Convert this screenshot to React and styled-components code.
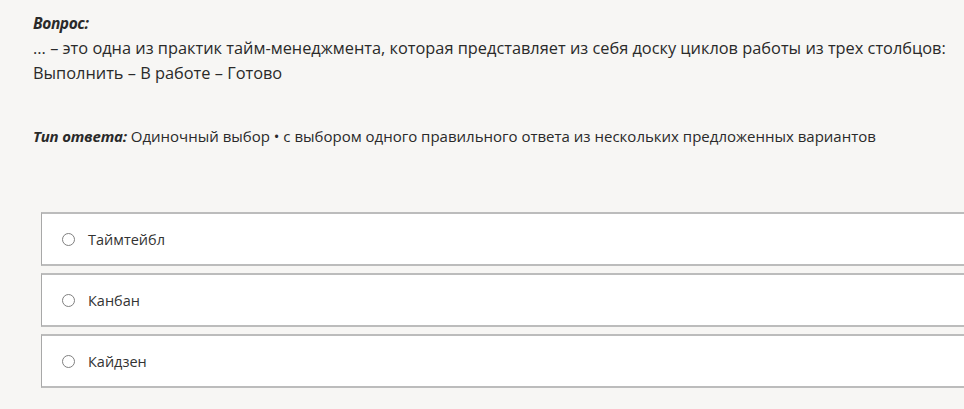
import React from 'react';
import styled, { createGlobalStyle } from 'styled-components';

const GlobalStyle = createGlobalStyle`
  html, body {
    margin: 0;
    padding: 0;
    background: #f7f6f4;
  }
  body {
    font-family: 'Open Sans', 'Noto Sans', sans-serif;
    color: #2a2a2a;
    overflow: hidden;
  }
`;

const Page = styled.div`
  padding: 12px 0 0 33px;
  width: 964px;
  height: 409px;
  box-sizing: border-box;
`;

const Label = styled.div`
  font-weight: 700;
  font-style: italic;
  font-size: 15.5px;
  line-height: 22px;
  letter-spacing: -0.4px;
`;

const Question = styled.p`
  margin: 2px 0 0;
  font-size: 16.35px;
  line-height: 25px;
  white-space: nowrap;
`;

const AnswerType = styled.p`
  margin: 39px 0 0;
  font-size: 15px;
  line-height: 22px;
  white-space: nowrap;
`;

const TypeLabel = styled.span`
  font-weight: 700;
  font-style: italic;
  letter-spacing: -0.2px;
`;

const Options = styled.div`
  margin: 65px 0 0 8px;
  display: flex;
  flex-direction: column;
  gap: 7px;
  width: 940px;
`;

const Option = styled.label`
  display: flex;
  align-items: center;
  gap: 13px;
  height: 50px;
  padding-left: 20px;
  background: #fff;
  border: 1px solid #a8a8a8;
  border-top: 2px solid #bcbcbc;
  border-bottom: 2px solid #bcbcbc;
  font-size: 14.5px;
  color: #333;
  cursor: pointer;
`;

const Radio = styled.span`
  box-sizing: border-box;
  width: 13px;
  height: 13px;
  border-radius: 50%;
  border: 1.6px solid #808080;
  flex-shrink: 0;
`;

const options = ['Таймтейбл', 'Канбан', 'Кайдзен'];

export default function App() {
  return (
    <>
      <GlobalStyle />
      <Page>
        <Label>Вопрос:</Label>
        <Question>
          ... – это одна из практик тайм-менеджмента, которая представляет из себя доску циклов работы из трех столбцов:
          <br />
          Выполнить – В работе – Готово
        </Question>
        <AnswerType>
          <TypeLabel>Тип ответа:</TypeLabel> Одиночный выбор • с выбором одного правильного ответа из нескольких предложенных вариантов
        </AnswerType>
        <Options>
          {options.map((o) => (
            <Option key={o}>
              <Radio />
              {o}
            </Option>
          ))}
        </Options>
      </Page>
    </>
  );
}
